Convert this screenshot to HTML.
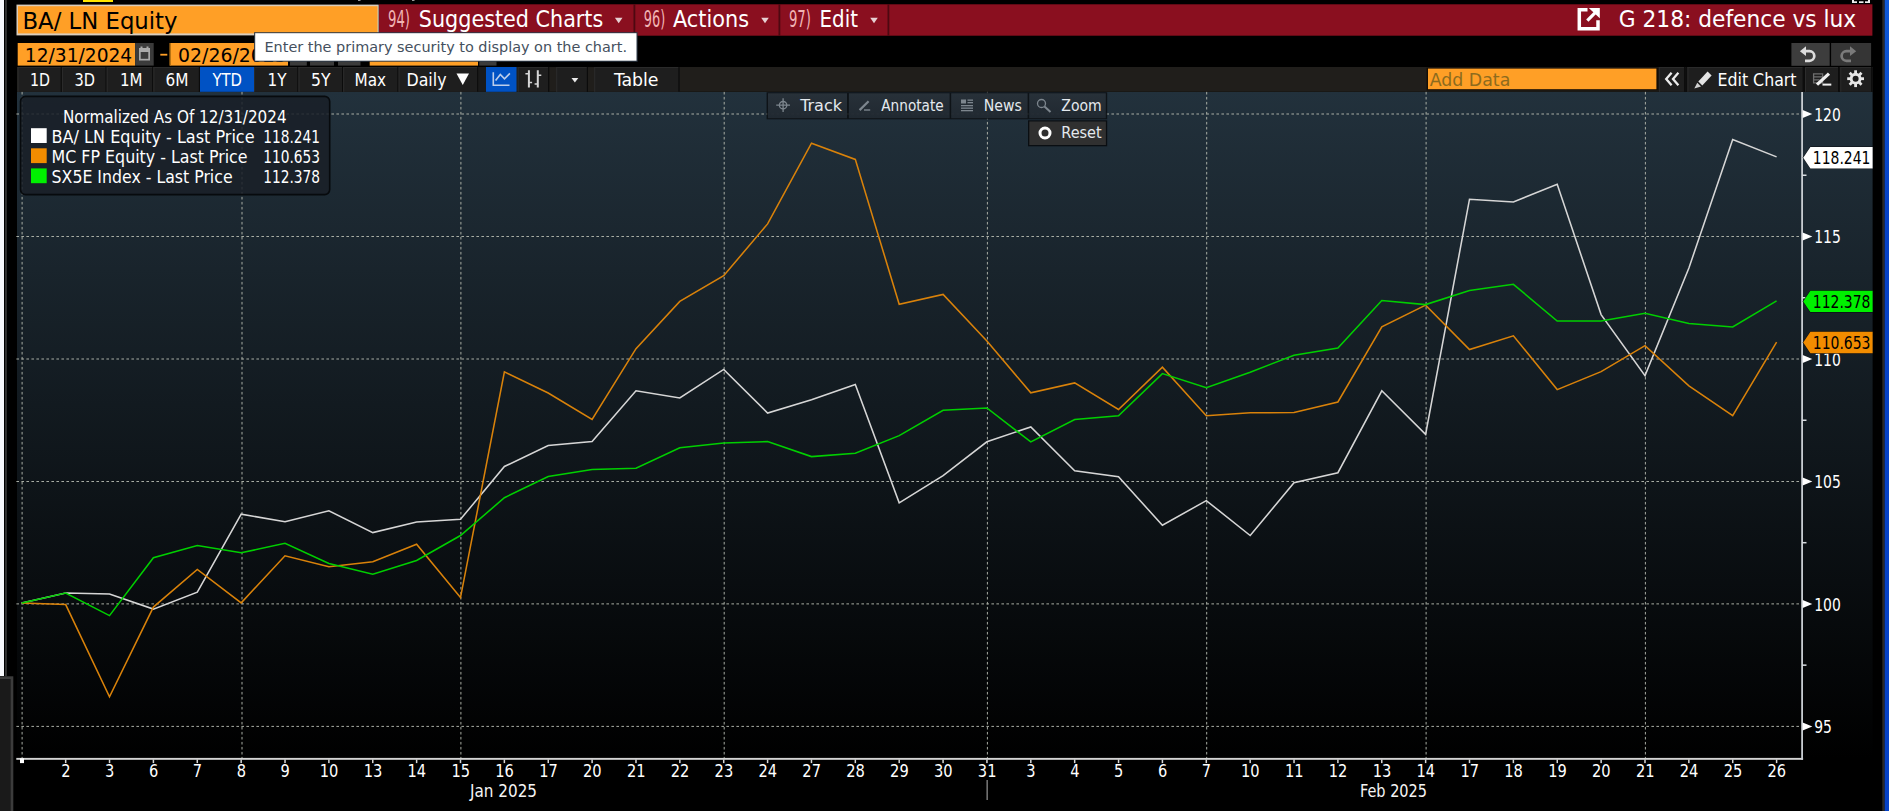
<!DOCTYPE html>
<html lang="en"><head><meta charset="utf-8"><title>G 218: defence vs lux</title>
<style>html,body{margin:0;padding:0;background:#000;overflow:hidden}svg text{white-space:pre}</style></head>
<body>
<svg width="1889" height="811" viewBox="0 0 1889 811" font-family='"DejaVu Sans Condensed","DejaVu Sans","Liberation Sans",sans-serif' style="display:block">
<defs>
<linearGradient id="bg" x1="0" y1="0" x2="0" y2="1">
<stop offset="0" stop-color="#22313c"/>
<stop offset="1" stop-color="#000000"/>
</linearGradient>
<linearGradient id="tb" x1="0" y1="0" x2="0" y2="1"><stop offset="0" stop-color="#2e3841"/><stop offset="1" stop-color="#252e37"/></linearGradient>
<linearGradient id="blue" x1="0" y1="0" x2="0" y2="1">
<stop offset="0" stop-color="#0f5ad8"/><stop offset="0.25" stop-color="#0642c6"/><stop offset="1" stop-color="#0642c6"/>
</linearGradient>
</defs>
<rect x="0" y="0" width="1889" height="811" fill="#000" />
<rect x="0" y="0" width="4" height="676" fill="#f8f9fd" />
<rect x="5" y="0" width="1.9" height="676.3" fill="#323232" />
<rect x="0" y="676.3" width="13.3" height="134.7" fill="#3c3c3c" />
<rect x="0" y="679" width="10.7" height="132" fill="#1a1a1a" />
<rect x="1882.3" y="0" width="2.4" height="811" fill="#2a2a2a" />
<rect x="1884.7" y="0" width="4.3" height="811" fill="url(#blue)" />
<rect x="83" y="0" width="30" height="2" fill="#ffe600" />
<rect x="358" y="0" width="2.5" height="1" fill="#999" />
<rect x="412" y="0" width="2.5" height="1" fill="#999" />
<rect x="1852" y="0" width="2" height="3" fill="#eee" />
<rect x="1852" y="1.3" width="5" height="1.7" fill="#eee" />
<rect x="1859" y="1.3" width="4.5" height="1.7" fill="#eee" />
<rect x="1865" y="1.3" width="5" height="1.7" fill="#eee" />
<rect x="1868" y="0" width="2" height="3" fill="#eee" />
<rect x="379" y="4.3" width="1493.4" height="31.4" fill="#8a0f1f" />
<rect x="633.5" y="4.3" width="1.8" height="31.4" fill="#4d0811" />
<rect x="778.5" y="4.3" width="1.8" height="31.4" fill="#4d0811" />
<rect x="887.5" y="4.3" width="1.8" height="31.4" fill="#4d0811" />
<rect x="16.5" y="4.6" width="362.2" height="30.8" fill="#d9cdbd" />
<rect x="18" y="6.2" width="359.5" height="27.2" fill="#ff9f26" />
<text x="22.5" y="29.2" font-size="23.5" fill="#000" textLength="155" lengthAdjust="spacingAndGlyphs" >BA/ LN Equity</text>
<text x="388" y="27.2" font-size="22.6" fill="#f0b4b4" textLength="22" lengthAdjust="spacingAndGlyphs" >94)</text>
<text x="418.8" y="27.2" font-size="23.4" fill="#fff" textLength="184.5" lengthAdjust="spacingAndGlyphs" >Suggested Charts</text>
<text x="643.8" y="27.2" font-size="22.6" fill="#f0b4b4" textLength="21.5" lengthAdjust="spacingAndGlyphs" >96)</text>
<text x="673" y="27.2" font-size="23.4" fill="#fff" textLength="76" lengthAdjust="spacingAndGlyphs" >Actions</text>
<text x="788.9" y="27.2" font-size="22.6" fill="#f0b4b4" textLength="22" lengthAdjust="spacingAndGlyphs" >97)</text>
<text x="819.6" y="27.2" font-size="23.4" fill="#fff" textLength="38.4" lengthAdjust="spacingAndGlyphs" >Edit</text>
<path d="M614.9 17.7h7.6l-3.8 5.6z" fill="#e6d0d2"/>
<path d="M761.2 17.7h7.6l-3.8 5.6z" fill="#e6d0d2"/>
<path d="M870.2 17.7h7.6l-3.8 5.6z" fill="#e6d0d2"/>
<path d="M1587.5 9.7H1579.3V28.8H1598V20.3" fill="none" stroke="#fff" stroke-width="3.5"/><path d="M1587.3 20.6L1596 11.8" stroke="#fff" stroke-width="3.2" fill="none"/><path d="M1588.8 7.9H1599.8V18.2z" fill="#fff"/>
<text x="1618.8" y="27.2" font-size="23.4" fill="#fff" textLength="237.4" lengthAdjust="spacingAndGlyphs" >G 218: defence vs lux</text>
<rect x="17.7" y="43" width="117.4" height="22.6" fill="#ff9f26" />
<text x="24.8" y="62" font-size="20.3" fill="#000" textLength="107.4" lengthAdjust="spacingAndGlyphs" >12/31/2024</text>
<rect x="135.1" y="43" width="18.6" height="22.6" fill="#3b3b3b" />
<g fill="#a9a9a9"><rect x="139" y="48" width="11" height="12.5"/><rect x="140.5" y="46.5" width="2" height="3"/><rect x="146.5" y="46.5" width="2" height="3"/></g><rect x="140.7" y="52" width="7.6" height="6.8" fill="#3b3b3b"/>
<rect x="160.3" y="53.8" width="7" height="1.8" fill="#ff9f26" />
<rect x="169.7" y="43" width="118.3" height="22.6" fill="#ff9f26" />
<rect x="169.7" y="43" width="1.2" height="22.6" fill="#b06d12" />
<text x="178.1" y="62" font-size="20.3" fill="#000" textLength="108.6" lengthAdjust="spacingAndGlyphs" >02/26/2025</text>
<rect x="290" y="43" width="16.8" height="22.6" fill="#3b3b3b" />
<rect x="310" y="43" width="24" height="22.6" fill="#3b3b3b" />
<rect x="338" y="43" width="22.5" height="22.6" fill="#3b3b3b" />
<rect x="369.7" y="43" width="108.3" height="22.6" fill="#ff9f26" />
<rect x="479.3" y="43" width="17.2" height="22.6" fill="#3b3b3b" />
<rect x="1791.4" y="43" width="38.3" height="22.8" fill="#3d3d3d" />
<rect x="1831.1" y="43" width="40" height="22.8" fill="#353535" />
<g fill="none" stroke-width="2.7"><path d="M1805.7 51.2H1809.5a4.8 4.8 0 0 1 0 9.6H1805" stroke="#dcdcdc"/><path d="M1850.1 51.2H1846.4a4.8 4.8 0 0 0 0 9.6H1851" stroke="#7a7a7a"/></g>
<path d="M1799.9 51.2L1806 46.3V56z" fill="#dcdcdc"/><path d="M1856.2 51.2L1850 46.3V56z" fill="#7a7a7a"/>
<rect x="254.1" y="32.2" width="383.5" height="29.5" fill="#2e3a48" />
<rect x="255.2" y="33.2" width="381.3" height="27.5" fill="#fff" />
<text x="264.5" y="52" font-size="14.8" fill="#44505e" textLength="362.5" lengthAdjust="spacingAndGlyphs" >Enter the primary security to display on the chart.</text>
<rect x="17" y="67" width="1855.6" height="24.8" fill="#201e1b" />
<rect x="17.6" y="67" width="44.3" height="24.8" fill="#1e1e1e" />
<rect x="17.6" y="67" width="44.3" height="1" fill="#2a2a2a" />
<rect x="17.6" y="67" width="1" height="24.8" fill="#2c2c2c" />
<rect x="60.7" y="67" width="1.2" height="24.8" fill="#0b0b0b" />
<text x="29.9" y="85.9" font-size="18.4" fill="#fff" textLength="20" lengthAdjust="spacingAndGlyphs" >1D</text>
<rect x="61.9" y="67" width="44.8" height="24.8" fill="#1e1e1e" />
<rect x="61.9" y="67" width="44.8" height="1" fill="#2a2a2a" />
<rect x="61.9" y="67" width="1" height="24.8" fill="#2c2c2c" />
<rect x="105.5" y="67" width="1.2" height="24.8" fill="#0b0b0b" />
<text x="74.5" y="85.9" font-size="18.4" fill="#fff" textLength="20.5" lengthAdjust="spacingAndGlyphs" >3D</text>
<rect x="106.7" y="67" width="46.7" height="24.8" fill="#1e1e1e" />
<rect x="106.7" y="67" width="46.7" height="1" fill="#2a2a2a" />
<rect x="106.7" y="67" width="1" height="24.8" fill="#2c2c2c" />
<rect x="152.2" y="67" width="1.2" height="24.8" fill="#0b0b0b" />
<text x="120" y="85.9" font-size="18.4" fill="#fff" textLength="22.5" lengthAdjust="spacingAndGlyphs" >1M</text>
<rect x="153.4" y="67" width="46.6" height="24.8" fill="#1e1e1e" />
<rect x="153.4" y="67" width="46.6" height="1" fill="#2a2a2a" />
<rect x="153.4" y="67" width="1" height="24.8" fill="#2c2c2c" />
<rect x="198.8" y="67" width="1.2" height="24.8" fill="#0b0b0b" />
<text x="165.5" y="85.9" font-size="18.4" fill="#fff" textLength="23" lengthAdjust="spacingAndGlyphs" >6M</text>
<rect x="200" y="67" width="54.1" height="24.8" fill="#0052c4" />
<text x="212.5" y="85.9" font-size="18.4" fill="#fff" textLength="29.5" lengthAdjust="spacingAndGlyphs" >YTD</text>
<rect x="254.1" y="67" width="44.4" height="24.8" fill="#1e1e1e" />
<rect x="254.1" y="67" width="44.4" height="1" fill="#2a2a2a" />
<rect x="254.1" y="67" width="1" height="24.8" fill="#2c2c2c" />
<rect x="297.3" y="67" width="1.2" height="24.8" fill="#0b0b0b" />
<text x="267.5" y="85.9" font-size="18.4" fill="#fff" textLength="19" lengthAdjust="spacingAndGlyphs" >1Y</text>
<rect x="298.5" y="67" width="44.7" height="24.8" fill="#1e1e1e" />
<rect x="298.5" y="67" width="44.7" height="1" fill="#2a2a2a" />
<rect x="298.5" y="67" width="1" height="24.8" fill="#2c2c2c" />
<rect x="342" y="67" width="1.2" height="24.8" fill="#0b0b0b" />
<text x="311" y="85.9" font-size="18.4" fill="#fff" textLength="19.5" lengthAdjust="spacingAndGlyphs" >5Y</text>
<rect x="343.2" y="67" width="55.4" height="24.8" fill="#1e1e1e" />
<rect x="343.2" y="67" width="55.4" height="1" fill="#2a2a2a" />
<rect x="343.2" y="67" width="1" height="24.8" fill="#2c2c2c" />
<rect x="397.4" y="67" width="1.2" height="24.8" fill="#0b0b0b" />
<text x="354.5" y="85.9" font-size="18.4" fill="#fff" textLength="31.5" lengthAdjust="spacingAndGlyphs" >Max</text>
<rect x="398.6" y="67" width="79.8" height="24.8" fill="#1e1e1e" />
<rect x="398.6" y="67" width="79.8" height="1" fill="#2a2a2a" />
<rect x="398.6" y="67" width="1" height="24.8" fill="#2c2c2c" />
<rect x="477.2" y="67" width="1.2" height="24.8" fill="#0b0b0b" />
<text x="406.5" y="85.9" font-size="18.4" fill="#fff" textLength="40" lengthAdjust="spacingAndGlyphs" >Daily</text>
<path d="M456.5 73.5h12.5l-6.25 11.5z" fill="#fff"/>
<rect x="478.4" y="67" width="7.6" height="24.8" fill="#1a1a1a" />
<rect x="486" y="67" width="30.5" height="24.8" fill="#0052c4" />
<g fill="none" stroke="#bccdea" stroke-width="1.6"><path d="M493.3 72.2V85.2H509.5"/><path d="M495.6 80.4L500.3 74.4L504.5 78.8L509.9 73.4"/></g>
<rect x="517.7" y="67" width="31.6" height="24.8" fill="#1e1e1e" />
<rect x="517.7" y="67" width="31.6" height="1" fill="#2a2a2a" />
<rect x="517.7" y="67" width="1" height="24.8" fill="#2c2c2c" />
<rect x="548.1" y="67" width="1.2" height="24.8" fill="#0b0b0b" />
<g stroke="#d6d6d6" stroke-width="2" fill="none"><path d="M528.9 70.3V87.4M537.8 70.3V87.4"/><path d="M525.4 73.8H528.9M528.9 82.6H532.1M537.8 75.3H541.3M534.6 83.9H537.8" stroke-width="1.5"/></g>
<rect x="556.2" y="67" width="31.8" height="24.8" fill="#1e1e1e" />
<rect x="556.2" y="67" width="31.8" height="1" fill="#2a2a2a" />
<rect x="556.2" y="67" width="1" height="24.8" fill="#2c2c2c" />
<rect x="586.8" y="67" width="1.2" height="24.8" fill="#0b0b0b" />
<path d="M571.5 77.9h6.8l-3.4 4.6z" fill="#eaeaea"/>
<rect x="594.2" y="67" width="85.4" height="24.8" fill="#1e1e1e" />
<rect x="594.2" y="67" width="85.4" height="1" fill="#2a2a2a" />
<rect x="594.2" y="67" width="1" height="24.8" fill="#2c2c2c" />
<rect x="678.4" y="67" width="1.2" height="24.8" fill="#0b0b0b" />
<text x="614" y="85.9" font-size="18.4" fill="#fff" textLength="44.5" lengthAdjust="spacingAndGlyphs" >Table</text>
<rect x="1426.6" y="67.6" width="231.9" height="22.8" fill="#140d05" />
<rect x="1428" y="68.6" width="228.4" height="20.6" fill="#ff9f26" />
<text x="1429.8" y="86" font-size="18.4" fill="#8d6b1e" textLength="80.5" lengthAdjust="spacingAndGlyphs" >Add Data</text>
<rect x="1658.5" y="67" width="214.1" height="24.8" fill="#0c0c0c" />
<rect x="1658.8" y="67" width="26.5" height="24.8" fill="#1e1e1e" />
<rect x="1658.8" y="67" width="26.5" height="1" fill="#2a2a2a" />
<rect x="1658.8" y="67" width="1" height="24.8" fill="#2c2c2c" />
<rect x="1684.1" y="67" width="1.2" height="24.8" fill="#0b0b0b" />
<g fill="none" stroke="#ececec" stroke-width="2.3"><path d="M1671.6 72.8l-5.4 6.2 5.4 6.2M1678.4 72.8l-5.4 6.2 5.4 6.2"/></g>
<rect x="1687.4" y="67" width="116.4" height="24.8" fill="#1e1e1e" />
<rect x="1687.4" y="67" width="116.4" height="1" fill="#2a2a2a" />
<rect x="1687.4" y="67" width="1" height="24.8" fill="#2c2c2c" />
<rect x="1802.6" y="67" width="1.2" height="24.8" fill="#0b0b0b" />
<path d="M1698.3 81.6L1707.6 71.6L1711.6 75.4L1702.3 85.4z" fill="#e4e4e4"/><path d="M1697.3 82.8L1701 86.4L1694.3 88.6z" fill="#cfcfcf"/>
<text x="1717.5" y="85.6" font-size="18" fill="#fff" textLength="79" lengthAdjust="spacingAndGlyphs" >Edit Chart</text>
<rect x="1805" y="67" width="34.2" height="24.8" fill="#1e1e1e" />
<rect x="1805" y="67" width="34.2" height="1" fill="#2a2a2a" />
<rect x="1805" y="67" width="1" height="24.8" fill="#2c2c2c" />
<rect x="1838" y="67" width="1.2" height="24.8" fill="#0b0b0b" />
<g fill="none" stroke="#6e6e6e" stroke-width="1.3"><path d="M1813.6 73.8h9v9h-9zM1813.6 76.8h9M1813.6 79.8h6"/></g><path d="M1817 84.6L1829 73.6" stroke="#f0f0f0" stroke-width="3.2" fill="none"/><rect x="1822.5" y="83.6" width="8.8" height="2" fill="#f0f0f0"/>
<rect x="1840.3" y="67" width="32" height="24.8" fill="#1e1e1e" />
<rect x="1840.3" y="67" width="32" height="1" fill="#2a2a2a" />
<rect x="1840.3" y="67" width="1" height="24.8" fill="#2c2c2c" />
<rect x="1871.1" y="67" width="1.2" height="24.8" fill="#0b0b0b" />
<g transform="translate(1855.6 78.7)" fill="#e6e6e6"><rect x="-1.4" y="-8.4" width="2.8" height="4.2" transform="rotate(0)"/><rect x="-1.4" y="-8.4" width="2.8" height="4.2" transform="rotate(45)"/><rect x="-1.4" y="-8.4" width="2.8" height="4.2" transform="rotate(90)"/><rect x="-1.4" y="-8.4" width="2.8" height="4.2" transform="rotate(135)"/><rect x="-1.4" y="-8.4" width="2.8" height="4.2" transform="rotate(180)"/><rect x="-1.4" y="-8.4" width="2.8" height="4.2" transform="rotate(225)"/><rect x="-1.4" y="-8.4" width="2.8" height="4.2" transform="rotate(270)"/><rect x="-1.4" y="-8.4" width="2.8" height="4.2" transform="rotate(315)"/><circle r="5.9" /><circle r="3" fill="#1d1d1d"/></g>
<rect x="17" y="92" width="1855.6" height="667" fill="url(#bg)" />
<g stroke="#a8ada4" stroke-width="1" stroke-dasharray="2.6 2.4" fill="none">
<path d="M16.4 114H1800.6"/>
<path d="M16.4 236.5H1800.6"/>
<path d="M16.4 359H1800.6"/>
<path d="M16.4 481.5H1800.6"/>
<path d="M16.4 603.9H1800.6"/>
<path d="M16.4 726.4H1800.6"/>
<path d="M22.1 91.9V758"/>
<path d="M242.0 91.9V758"/>
<path d="M460.9 91.9V758"/>
<path d="M724.2 91.9V758"/>
<path d="M987.4 91.9V758"/>
<path d="M1206.7 91.9V758"/>
<path d="M1426.1 91.9V758"/>
<path d="M1645.4 91.9V758"/>
</g>
<rect x="20.5" y="96.4" width="309.2" height="98.2" rx="5" fill="#1a2028" fill-opacity="0.86" stroke="#070a0d" stroke-width="1.6"/>
<text x="62.9" y="123.1" font-size="16.8" fill="#fff" textLength="223.7" lengthAdjust="spacingAndGlyphs" >Normalized As Of 12/31/2024</text>
<rect x="31" y="128.2" width="15.7" height="14.8" fill="#ffffff" />
<text x="51.6" y="142.9" font-size="16.8" fill="#fff" textLength="203" lengthAdjust="spacingAndGlyphs" >BA/ LN Equity - Last Price</text>
<text x="263.3" y="142.9" font-size="16.8" fill="#fff" textLength="56.7" lengthAdjust="spacingAndGlyphs" >118.241</text>
<rect x="31" y="148.3" width="15.7" height="14.8" fill="#f28c00" />
<text x="51.6" y="163.1" font-size="16.8" fill="#fff" textLength="196" lengthAdjust="spacingAndGlyphs" >MC FP Equity - Last Price</text>
<text x="263.3" y="163.1" font-size="16.8" fill="#fff" textLength="56.7" lengthAdjust="spacingAndGlyphs" >110.653</text>
<rect x="31" y="168.4" width="15.7" height="14.8" fill="#00f000" />
<text x="51.6" y="183.1" font-size="16.8" fill="#fff" textLength="181" lengthAdjust="spacingAndGlyphs" >SX5E Index - Last Price</text>
<text x="263.3" y="183.1" font-size="16.8" fill="#fff" textLength="56.7" lengthAdjust="spacingAndGlyphs" >112.378</text>
<rect x="766.6" y="92.2" width="340.6" height="27.1" fill="#0a0e12" fill-opacity="0.85"/>
<rect x="768" y="93.3" width="79" height="24.9" fill="url(#tb)" fill-opacity="0.8"/>
<rect x="848.9" y="93.3" width="100.7" height="24.9" fill="url(#tb)" fill-opacity="0.8"/>
<rect x="951.2" y="93.3" width="76.4" height="24.9" fill="url(#tb)" fill-opacity="0.8"/>
<rect x="1029.2" y="93.3" width="76.6" height="24.9" fill="url(#tb)" fill-opacity="0.8"/>
<rect x="1028" y="120.3" width="79.2" height="26" fill="#0a0e12" />
<rect x="1029.3" y="121.5" width="76.6" height="23.5" fill="#303030" />
<text x="800.3" y="110.8" font-size="15.8" fill="#e4e9ee" textLength="41.8" lengthAdjust="spacingAndGlyphs" >Track</text>
<text x="881.3" y="110.8" font-size="15.8" fill="#e4e9ee" textLength="62.4" lengthAdjust="spacingAndGlyphs" >Annotate</text>
<text x="983.7" y="110.8" font-size="15.8" fill="#e4e9ee" textLength="38.1" lengthAdjust="spacingAndGlyphs" >News</text>
<text x="1061.3" y="110.8" font-size="15.8" fill="#e4e9ee" textLength="40.4" lengthAdjust="spacingAndGlyphs" >Zoom</text>
<text x="1061.3" y="138" font-size="15.8" fill="#e4e9ee" textLength="40.4" lengthAdjust="spacingAndGlyphs" >Reset</text>
<g stroke="#7d868e" stroke-width="1.3" fill="none"><circle cx="783.1" cy="105.2" r="3.7"/><path d="M783.1 98.2v13.8M776.2 105.2h13.8"/></g>
<g stroke="#7d868e" fill="none"><path d="M859.6 110.1l9-8.8" stroke-width="2.2"/><path d="M864 110h6.2" stroke-width="1.4"/></g>
<g fill="#7d868e"><rect x="961" y="99.5" width="5" height="4"/><rect x="967.5" y="99.5" width="5.5" height="1.3"/><rect x="967.5" y="102" width="5.5" height="1.3"/><rect x="961" y="105" width="12" height="1.3"/><rect x="961" y="107.5" width="12" height="1.3"/><rect x="961" y="110" width="12" height="1.3"/></g>
<g stroke="#7d868e" stroke-width="1.3" fill="none"><circle cx="1041.5" cy="103.5" r="4"/><path d="M1044.5 106.5l6 5.5" stroke-width="2"/></g>
<circle cx="1045" cy="133" r="5" fill="none" stroke="#fff" stroke-width="3"/>
<polyline points="21.8,602.9 65.7,593.1 109.5,594.1 153.4,609.1 197.3,592.2 241.2,514.2 285.0,521.7 328.9,510.7 372.8,532.6 416.6,521.9 460.5,519.3 504.4,466.5 548.2,445.6 592.1,441.6 636.0,390.8 679.8,398.0 723.7,369.4 767.6,413.0 811.5,399.8 855.3,384.6 899.2,502.8 943.1,475.7 986.9,441.8 1030.8,426.9 1074.7,470.7 1118.5,476.7 1162.4,525.3 1206.3,500.6 1250.2,535.5 1294.0,482.7 1337.9,472.7 1381.8,390.8 1425.6,434.4 1469.5,199.2 1513.4,201.9 1557.2,184.3 1601.1,314.6 1645.0,375.6 1688.9,268.0 1732.7,139.5 1776.6,156.9" fill="none" stroke="#d6d6d6" stroke-width="1.55" stroke-linejoin="miter"/>
<polyline points="21.8,602.9 65.7,604.6 109.5,696.8 153.4,607.1 197.3,569.5 241.2,602.9 285.0,555.8 328.9,566.7 372.8,561.8 416.6,544.3 460.5,597.6 504.4,371.9 548.2,393.0 592.1,419.5 636.0,348.7 679.8,301.4 723.7,275.7 767.6,223.9 811.5,143.2 855.3,159.4 899.2,304.3 943.1,294.4 986.9,341.0 1030.8,392.8 1074.7,382.9 1118.5,409.5 1162.4,367.2 1206.3,415.7 1250.2,412.8 1294.0,412.5 1337.9,402.0 1381.8,326.8 1425.6,305.1 1469.5,349.5 1513.4,335.8 1557.2,389.6 1601.1,371.6 1645.0,345.7 1688.9,385.8 1732.7,415.7 1776.6,342.2" fill="none" stroke="#d9820a" stroke-width="1.55" stroke-linejoin="miter"/>
<polyline points="21.8,602.9 65.7,593.1 109.5,615.6 153.4,557.8 197.3,545.6 241.2,552.8 285.0,543.3 328.9,563.5 372.8,574.2 416.6,560.5 460.5,535.5 504.4,497.7 548.2,476.5 592.1,469.5 636.0,468.3 679.8,447.8 723.7,442.9 767.6,441.6 811.5,456.6 855.3,453.3 899.2,435.6 943.1,410.3 986.9,408.0 1030.8,441.9 1074.7,419.5 1118.5,415.7 1162.4,373.6 1206.3,387.8 1250.2,372.2 1294.0,355.2 1337.9,348.1 1381.8,300.5 1425.6,304.6 1469.5,290.5 1513.4,284.3 1557.2,321.0 1601.1,321.0 1645.0,313.2 1688.9,323.5 1732.7,327.0 1776.6,300.9" fill="none" stroke="#00cf00" stroke-width="1.55" stroke-linejoin="miter"/>
<rect x="16.3" y="757.9" width="1786.8" height="1.9" fill="#d4d4d4" />
<rect x="1801.2" y="92" width="1.8" height="667.8" fill="#c8cdd2" />
<rect x="20" y="758.3" width="4" height="4.8" fill="#fff" />
<rect x="64.92" y="759.5" width="1.5" height="3.6" fill="#d8d8d8" />
<text x="65.87" y="777.2" font-size="17.5" fill="#fff" textLength="9.3" lengthAdjust="spacingAndGlyphs" text-anchor="middle" >2</text>
<rect x="108.79" y="759.5" width="1.5" height="3.6" fill="#d8d8d8" />
<text x="109.74" y="777.2" font-size="17.5" fill="#fff" textLength="9.3" lengthAdjust="spacingAndGlyphs" text-anchor="middle" >3</text>
<rect x="152.66" y="759.5" width="1.5" height="3.6" fill="#d8d8d8" />
<text x="153.61" y="777.2" font-size="17.5" fill="#fff" textLength="9.3" lengthAdjust="spacingAndGlyphs" text-anchor="middle" >6</text>
<rect x="196.53" y="759.5" width="1.5" height="3.6" fill="#d8d8d8" />
<text x="197.48" y="777.2" font-size="17.5" fill="#fff" textLength="9.3" lengthAdjust="spacingAndGlyphs" text-anchor="middle" >7</text>
<rect x="240.4" y="759.5" width="1.5" height="3.6" fill="#d8d8d8" />
<text x="241.35" y="777.2" font-size="17.5" fill="#fff" textLength="9.3" lengthAdjust="spacingAndGlyphs" text-anchor="middle" >8</text>
<rect x="284.27" y="759.5" width="1.5" height="3.6" fill="#d8d8d8" />
<text x="285.22" y="777.2" font-size="17.5" fill="#fff" textLength="9.3" lengthAdjust="spacingAndGlyphs" text-anchor="middle" >9</text>
<rect x="328.14" y="759.5" width="1.5" height="3.6" fill="#d8d8d8" />
<text x="329.09" y="777.2" font-size="17.5" fill="#fff" textLength="18.6" lengthAdjust="spacingAndGlyphs" text-anchor="middle" >10</text>
<rect x="372.01" y="759.5" width="1.5" height="3.6" fill="#d8d8d8" />
<text x="372.96" y="777.2" font-size="17.5" fill="#fff" textLength="18.6" lengthAdjust="spacingAndGlyphs" text-anchor="middle" >13</text>
<rect x="415.88" y="759.5" width="1.5" height="3.6" fill="#d8d8d8" />
<text x="416.83" y="777.2" font-size="17.5" fill="#fff" textLength="18.6" lengthAdjust="spacingAndGlyphs" text-anchor="middle" >14</text>
<rect x="459.75" y="759.5" width="1.5" height="3.6" fill="#d8d8d8" />
<text x="460.7" y="777.2" font-size="17.5" fill="#fff" textLength="18.6" lengthAdjust="spacingAndGlyphs" text-anchor="middle" >15</text>
<rect x="503.62" y="759.5" width="1.5" height="3.6" fill="#d8d8d8" />
<text x="504.57" y="777.2" font-size="17.5" fill="#fff" textLength="18.6" lengthAdjust="spacingAndGlyphs" text-anchor="middle" >16</text>
<rect x="547.49" y="759.5" width="1.5" height="3.6" fill="#d8d8d8" />
<text x="548.44" y="777.2" font-size="17.5" fill="#fff" textLength="18.6" lengthAdjust="spacingAndGlyphs" text-anchor="middle" >17</text>
<rect x="591.36" y="759.5" width="1.5" height="3.6" fill="#d8d8d8" />
<text x="592.31" y="777.2" font-size="17.5" fill="#fff" textLength="18.6" lengthAdjust="spacingAndGlyphs" text-anchor="middle" >20</text>
<rect x="635.23" y="759.5" width="1.5" height="3.6" fill="#d8d8d8" />
<text x="636.18" y="777.2" font-size="17.5" fill="#fff" textLength="18.6" lengthAdjust="spacingAndGlyphs" text-anchor="middle" >21</text>
<rect x="679.1" y="759.5" width="1.5" height="3.6" fill="#d8d8d8" />
<text x="680.05" y="777.2" font-size="17.5" fill="#fff" textLength="18.6" lengthAdjust="spacingAndGlyphs" text-anchor="middle" >22</text>
<rect x="722.97" y="759.5" width="1.5" height="3.6" fill="#d8d8d8" />
<text x="723.92" y="777.2" font-size="17.5" fill="#fff" textLength="18.6" lengthAdjust="spacingAndGlyphs" text-anchor="middle" >23</text>
<rect x="766.84" y="759.5" width="1.5" height="3.6" fill="#d8d8d8" />
<text x="767.79" y="777.2" font-size="17.5" fill="#fff" textLength="18.6" lengthAdjust="spacingAndGlyphs" text-anchor="middle" >24</text>
<rect x="810.71" y="759.5" width="1.5" height="3.6" fill="#d8d8d8" />
<text x="811.66" y="777.2" font-size="17.5" fill="#fff" textLength="18.6" lengthAdjust="spacingAndGlyphs" text-anchor="middle" >27</text>
<rect x="854.58" y="759.5" width="1.5" height="3.6" fill="#d8d8d8" />
<text x="855.53" y="777.2" font-size="17.5" fill="#fff" textLength="18.6" lengthAdjust="spacingAndGlyphs" text-anchor="middle" >28</text>
<rect x="898.45" y="759.5" width="1.5" height="3.6" fill="#d8d8d8" />
<text x="899.4" y="777.2" font-size="17.5" fill="#fff" textLength="18.6" lengthAdjust="spacingAndGlyphs" text-anchor="middle" >29</text>
<rect x="942.32" y="759.5" width="1.5" height="3.6" fill="#d8d8d8" />
<text x="943.27" y="777.2" font-size="17.5" fill="#fff" textLength="18.6" lengthAdjust="spacingAndGlyphs" text-anchor="middle" >30</text>
<rect x="986.19" y="759.5" width="1.5" height="3.6" fill="#d8d8d8" />
<text x="987.14" y="777.2" font-size="17.5" fill="#fff" textLength="18.6" lengthAdjust="spacingAndGlyphs" text-anchor="middle" >31</text>
<rect x="1030.06" y="759.5" width="1.5" height="3.6" fill="#d8d8d8" />
<text x="1031.01" y="777.2" font-size="17.5" fill="#fff" textLength="9.3" lengthAdjust="spacingAndGlyphs" text-anchor="middle" >3</text>
<rect x="1073.93" y="759.5" width="1.5" height="3.6" fill="#d8d8d8" />
<text x="1074.88" y="777.2" font-size="17.5" fill="#fff" textLength="9.3" lengthAdjust="spacingAndGlyphs" text-anchor="middle" >4</text>
<rect x="1117.8" y="759.5" width="1.5" height="3.6" fill="#d8d8d8" />
<text x="1118.75" y="777.2" font-size="17.5" fill="#fff" textLength="9.3" lengthAdjust="spacingAndGlyphs" text-anchor="middle" >5</text>
<rect x="1161.67" y="759.5" width="1.5" height="3.6" fill="#d8d8d8" />
<text x="1162.62" y="777.2" font-size="17.5" fill="#fff" textLength="9.3" lengthAdjust="spacingAndGlyphs" text-anchor="middle" >6</text>
<rect x="1205.54" y="759.5" width="1.5" height="3.6" fill="#d8d8d8" />
<text x="1206.49" y="777.2" font-size="17.5" fill="#fff" textLength="9.3" lengthAdjust="spacingAndGlyphs" text-anchor="middle" >7</text>
<rect x="1249.41" y="759.5" width="1.5" height="3.6" fill="#d8d8d8" />
<text x="1250.36" y="777.2" font-size="17.5" fill="#fff" textLength="18.6" lengthAdjust="spacingAndGlyphs" text-anchor="middle" >10</text>
<rect x="1293.28" y="759.5" width="1.5" height="3.6" fill="#d8d8d8" />
<text x="1294.23" y="777.2" font-size="17.5" fill="#fff" textLength="18.6" lengthAdjust="spacingAndGlyphs" text-anchor="middle" >11</text>
<rect x="1337.15" y="759.5" width="1.5" height="3.6" fill="#d8d8d8" />
<text x="1338.1" y="777.2" font-size="17.5" fill="#fff" textLength="18.6" lengthAdjust="spacingAndGlyphs" text-anchor="middle" >12</text>
<rect x="1381.02" y="759.5" width="1.5" height="3.6" fill="#d8d8d8" />
<text x="1381.97" y="777.2" font-size="17.5" fill="#fff" textLength="18.6" lengthAdjust="spacingAndGlyphs" text-anchor="middle" >13</text>
<rect x="1424.89" y="759.5" width="1.5" height="3.6" fill="#d8d8d8" />
<text x="1425.84" y="777.2" font-size="17.5" fill="#fff" textLength="18.6" lengthAdjust="spacingAndGlyphs" text-anchor="middle" >14</text>
<rect x="1468.76" y="759.5" width="1.5" height="3.6" fill="#d8d8d8" />
<text x="1469.71" y="777.2" font-size="17.5" fill="#fff" textLength="18.6" lengthAdjust="spacingAndGlyphs" text-anchor="middle" >17</text>
<rect x="1512.63" y="759.5" width="1.5" height="3.6" fill="#d8d8d8" />
<text x="1513.58" y="777.2" font-size="17.5" fill="#fff" textLength="18.6" lengthAdjust="spacingAndGlyphs" text-anchor="middle" >18</text>
<rect x="1556.5" y="759.5" width="1.5" height="3.6" fill="#d8d8d8" />
<text x="1557.45" y="777.2" font-size="17.5" fill="#fff" textLength="18.6" lengthAdjust="spacingAndGlyphs" text-anchor="middle" >19</text>
<rect x="1600.37" y="759.5" width="1.5" height="3.6" fill="#d8d8d8" />
<text x="1601.32" y="777.2" font-size="17.5" fill="#fff" textLength="18.6" lengthAdjust="spacingAndGlyphs" text-anchor="middle" >20</text>
<rect x="1644.24" y="759.5" width="1.5" height="3.6" fill="#d8d8d8" />
<text x="1645.19" y="777.2" font-size="17.5" fill="#fff" textLength="18.6" lengthAdjust="spacingAndGlyphs" text-anchor="middle" >21</text>
<rect x="1688.11" y="759.5" width="1.5" height="3.6" fill="#d8d8d8" />
<text x="1689.06" y="777.2" font-size="17.5" fill="#fff" textLength="18.6" lengthAdjust="spacingAndGlyphs" text-anchor="middle" >24</text>
<rect x="1731.98" y="759.5" width="1.5" height="3.6" fill="#d8d8d8" />
<text x="1732.93" y="777.2" font-size="17.5" fill="#fff" textLength="18.6" lengthAdjust="spacingAndGlyphs" text-anchor="middle" >25</text>
<rect x="1775.85" y="759.5" width="1.5" height="3.6" fill="#d8d8d8" />
<text x="1776.8" y="777.2" font-size="17.5" fill="#fff" textLength="18.6" lengthAdjust="spacingAndGlyphs" text-anchor="middle" >26</text>
<text x="503.5" y="797.3" font-size="17" fill="#f4f4f4" textLength="67" lengthAdjust="spacingAndGlyphs" text-anchor="middle" >Jan 2025</text>
<text x="1393.5" y="797.3" font-size="17" fill="#f4f4f4" textLength="67" lengthAdjust="spacingAndGlyphs" text-anchor="middle" >Feb 2025</text>
<rect x="986.5" y="780" width="1.3" height="20" fill="#8a8a8a" />
<path d="M1802.7 110l9.6 4l-9.6 4z" fill="#fff"/>
<text x="1814.2" y="120.7" font-size="16.8" fill="#fff" textLength="26.6" lengthAdjust="spacingAndGlyphs" >120</text>
<path d="M1802.7 232.5l9.6 4l-9.6 4z" fill="#fff"/>
<text x="1814.2" y="243.2" font-size="16.8" fill="#fff" textLength="26.6" lengthAdjust="spacingAndGlyphs" >115</text>
<path d="M1802.7 355l9.6 4l-9.6 4z" fill="#fff"/>
<text x="1814.2" y="365.7" font-size="16.8" fill="#fff" textLength="26.6" lengthAdjust="spacingAndGlyphs" >110</text>
<path d="M1802.7 477.5l9.6 4l-9.6 4z" fill="#fff"/>
<text x="1814.2" y="488.2" font-size="16.8" fill="#fff" textLength="26.6" lengthAdjust="spacingAndGlyphs" >105</text>
<path d="M1802.7 599.9l9.6 4l-9.6 4z" fill="#fff"/>
<text x="1814.2" y="610.6" font-size="16.8" fill="#fff" textLength="26.6" lengthAdjust="spacingAndGlyphs" >100</text>
<path d="M1802.7 722.4l9.6 4l-9.6 4z" fill="#fff"/>
<text x="1814.2" y="733.1" font-size="16.8" fill="#fff" textLength="17.7" lengthAdjust="spacingAndGlyphs" >95</text>
<rect x="1802.1" y="174.5" width="4.4" height="1.5" fill="#d8dce0" />
<rect x="1802.1" y="297" width="4.4" height="1.5" fill="#d8dce0" />
<rect x="1802.1" y="419.5" width="4.4" height="1.5" fill="#d8dce0" />
<rect x="1802.1" y="541.95" width="4.4" height="1.5" fill="#d8dce0" />
<rect x="1802.1" y="664.4" width="4.4" height="1.5" fill="#d8dce0" />
<path d="M1803.2 157.7L1810.4 147H1872.6V168.4H1810.4z" fill="#ffffff" stroke="#0a0d10" stroke-width="1" paint-order="stroke"/>
<text x="1812.8" y="164.4" font-size="17" fill="#000" textLength="57.6" lengthAdjust="spacingAndGlyphs" >118.241</text>
<path d="M1803.2 301.4L1810.4 290.7H1872.6V312.1H1810.4z" fill="#00f000" stroke="#0a0d10" stroke-width="1" paint-order="stroke"/>
<text x="1812.8" y="308.1" font-size="17" fill="#000" textLength="57.6" lengthAdjust="spacingAndGlyphs" >112.378</text>
<path d="M1803.2 342.5L1810.4 331.8H1872.6V353.2H1810.4z" fill="#f28c00" stroke="#0a0d10" stroke-width="1" paint-order="stroke"/>
<text x="1812.8" y="349.2" font-size="17" fill="#000" textLength="57.6" lengthAdjust="spacingAndGlyphs" >110.653</text>
</svg>
</body></html>
